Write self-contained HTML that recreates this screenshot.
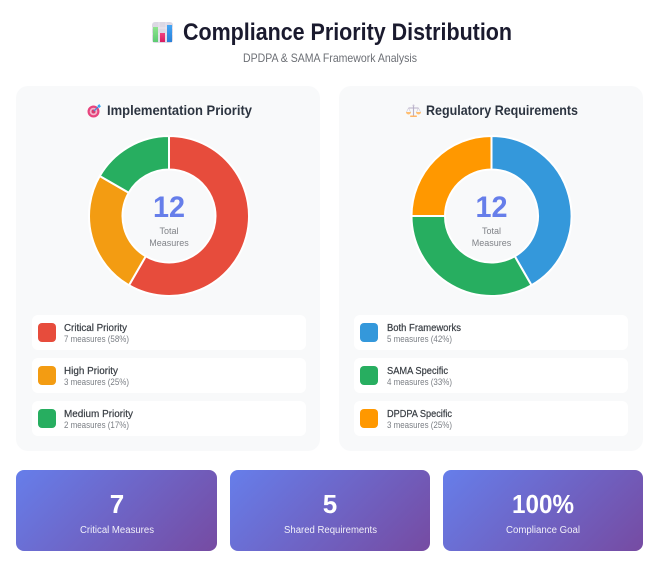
<!DOCTYPE html>
<html lang="en">
<head>
<meta charset="utf-8">
<title>Compliance Priority Distribution</title>
<style>
html,body{margin:0;padding:0;background:#fff;width:658px;height:566px;overflow:hidden}
body{position:relative;font-family:"Liberation Sans",sans-serif}
.panel{position:absolute;top:86px;width:304px;height:365px;background:#f8f9fa;border-radius:12px}
.item{position:absolute;width:274px;height:35px;background:#fff;border-radius:6px}
.sw{position:absolute;left:6px;top:8px;width:18px;height:19px;border-radius:4px}
.stat{position:absolute;top:470px;height:81px;border-radius:8px;background:linear-gradient(135deg,#667eea 0%,#764ba2 100%)}
svg{position:absolute;left:0;top:0}
text{font-family:"Liberation Sans",sans-serif}
.t{font-size:10px;fill:#3a3f45;stroke:#3a3f45;stroke-width:.22px}
.s{font-size:9px;fill:#7b7f85}
.pt{font-weight:700;font-size:14px;fill:#2c3440}
.n{font-weight:700;font-size:30px;fill:#667eea}
.c{font-size:9px;fill:#808388}
.sn{font-weight:700;font-size:26px;fill:#fff}
.sl{font-size:10px;fill:#fff;fill-opacity:.9}
</style>
</head>
<body>
<div class="panel" style="left:16px"></div>
<div class="panel" style="left:339px"></div>

<div class="item" style="left:32px;top:315px"><div class="sw" style="background:#e74c3c"></div></div>
<div class="item" style="left:32px;top:358px"><div class="sw" style="background:#f39c12"></div></div>
<div class="item" style="left:32px;top:401px"><div class="sw" style="background:#27ae60"></div></div>
<div class="item" style="left:354px;top:315px"><div class="sw" style="background:#3498db"></div></div>
<div class="item" style="left:354px;top:358px"><div class="sw" style="background:#27ae60"></div></div>
<div class="item" style="left:354px;top:401px"><div class="sw" style="background:#ff9800"></div></div>

<div class="stat" style="left:16px;width:201px"></div>
<div class="stat" style="left:230px;width:200px"></div>
<div class="stat" style="left:443px;width:200px"></div>

<svg width="658" height="566" viewBox="0 0 658 566" xmlns="http://www.w3.org/2000/svg">
  <defs>
    <linearGradient id="g1" x1="0" y1="0" x2="0" y2="1"><stop offset="0" stop-color="#8fe48f"/><stop offset="1" stop-color="#5ccb72"/></linearGradient>
    <linearGradient id="g2" x1="0" y1="0" x2="0" y2="1"><stop offset="0" stop-color="#f2407f"/><stop offset="1" stop-color="#d81b60"/></linearGradient>
    <linearGradient id="g3" x1="0" y1="0" x2="0" y2="1"><stop offset="0" stop-color="#42a5f5"/><stop offset="1" stop-color="#2a80d8"/></linearGradient>
  </defs>

  <!-- Header icon -->
  <rect x="152" y="22" width="21" height="21" rx="3" fill="#dcd8e4"/>
  <path d="M152 28h21M152 34h21M159 22v21M166 22v21" stroke="#efebf3" stroke-width=".7"/>
  <rect x="153" y="27" width="5" height="15" fill="url(#g1)"/>
  <rect x="160" y="33" width="5" height="9" fill="url(#g2)"/>
  <rect x="167" y="25" width="5" height="17" fill="url(#g3)"/>

  <text x="183" y="40" font-size="24" font-weight="700" fill="#1a1a2e" textLength="329" lengthAdjust="spacingAndGlyphs">Compliance Priority Distribution</text>
  <text x="243" y="62" font-size="12" fill="#6c6f75" textLength="174" lengthAdjust="spacingAndGlyphs">DPDPA &amp; SAMA Framework Analysis</text>

  <!-- Target icon -->
  <circle cx="93.5" cy="111.500" r="6" fill="#e8457e"/>
  <circle cx="93.5" cy="111.500" r="3.800" fill="#f3b6cb"/>
  <circle cx="93.5" cy="111.500" r="2" fill="#d83a6e"/>
  <path d="M94 111l5-5" stroke="#3f8fdc" stroke-width="1.200"/>
  <path d="M97.500 105.500l2-1.500.5 1.500 1.200.5-2 2z" fill="#35a4f0"/>
  <text class="pt" x="107" y="115" textLength="145" lengthAdjust="spacingAndGlyphs">Implementation Priority</text>

  <!-- Scales icon -->
  <path d="M413.500 105.500v10M408.500 108h10" stroke="#b8b0c8" stroke-width="1.100" fill="none"/>
  <path d="M408.500 108l-2 4M408.500 108l2 4M418.500 108l-2 4M418.500 108l2 4" stroke="#cdc7d8" stroke-width=".6" fill="none"/>
  <path d="M406 112h5a2.500 2.500 0 0 1-5 0zM416 112h5a2.500 2.500 0 0 1-5 0z" fill="#ffbe70"/>
  <rect x="410" y="115.500" width="7" height="1.500" rx=".7" fill="#ffb566"/>
  <circle cx="413.500" cy="105.500" r="1" fill="#c9c2d4"/>
  <text class="pt" x="426" y="115" textLength="152" lengthAdjust="spacingAndGlyphs">Regulatory Requirements</text>

  <!-- Left donut -->
  <g stroke="#fff" stroke-width="2" stroke-linejoin="miter">
    <path fill="#e74c3c" d="M169 136A80 80 0 1 1 129 285.280L145.750 256.270A46.500 46.500 0 1 0 169 169.500Z"/>
    <path fill="#f39c12" d="M129 285.280A80 80 0 0 1 99.720 176L128.730 192.750A46.500 46.500 0 0 0 145.750 256.270Z"/>
    <path fill="#27ae60" d="M99.720 176A80 80 0 0 1 169 136L169 169.500A46.500 46.500 0 0 0 128.730 192.750Z"/>
  </g>
  <text class="n" x="169" y="217" text-anchor="middle" textLength="32" lengthAdjust="spacingAndGlyphs">12</text>
  <text class="c" x="169" y="234" text-anchor="middle">Total</text>
  <text class="c" x="169" y="246" text-anchor="middle">Measures</text>

  <!-- Right donut -->
  <g stroke="#fff" stroke-width="2" stroke-linejoin="miter">
    <path fill="#3498db" d="M491.500 136A80 80 0 0 1 531.500 285.280L514.750 256.270A46.500 46.500 0 0 0 491.500 169.500Z"/>
    <path fill="#27ae60" d="M531.500 285.280A80 80 0 0 1 411.500 216L445 216A46.500 46.500 0 0 0 514.750 256.270Z"/>
    <path fill="#ff9800" d="M411.500 216A80 80 0 0 1 491.500 136L491.500 169.500A46.500 46.500 0 0 0 445 216Z"/>
  </g>
  <text class="n" x="491.500" y="217" text-anchor="middle" textLength="32" lengthAdjust="spacingAndGlyphs">12</text>
  <text class="c" x="491.500" y="234" text-anchor="middle">Total</text>
  <text class="c" x="491.500" y="246" text-anchor="middle">Measures</text>

  <!-- Left legend -->
  <text class="t" x="64" y="331" textLength="63" lengthAdjust="spacingAndGlyphs">Critical Priority</text>
  <text class="s" x="64" y="342" textLength="65" lengthAdjust="spacingAndGlyphs">7 measures (58%)</text>
  <text class="t" x="64" y="374" textLength="54" lengthAdjust="spacingAndGlyphs">High Priority</text>
  <text class="s" x="64" y="385" textLength="65" lengthAdjust="spacingAndGlyphs">3 measures (25%)</text>
  <text class="t" x="64" y="417" textLength="69" lengthAdjust="spacingAndGlyphs">Medium Priority</text>
  <text class="s" x="64" y="428" textLength="65" lengthAdjust="spacingAndGlyphs">2 measures (17%)</text>

  <!-- Right legend -->
  <text class="t" x="387" y="331" textLength="74" lengthAdjust="spacingAndGlyphs">Both Frameworks</text>
  <text class="s" x="387" y="342" textLength="65" lengthAdjust="spacingAndGlyphs">5 measures (42%)</text>
  <text class="t" x="387" y="374" textLength="61" lengthAdjust="spacingAndGlyphs">SAMA Specific</text>
  <text class="s" x="387" y="385" textLength="65" lengthAdjust="spacingAndGlyphs">4 measures (33%)</text>
  <text class="t" x="387" y="417" textLength="65" lengthAdjust="spacingAndGlyphs">DPDPA Specific</text>
  <text class="s" x="387" y="428" textLength="65" lengthAdjust="spacingAndGlyphs">3 measures (25%)</text>

  <!-- Stats -->
  <text class="sn" x="117" y="513" text-anchor="middle">7</text>
  <text class="sl" x="80" y="533" textLength="74" lengthAdjust="spacingAndGlyphs">Critical Measures</text>
  <text class="sn" x="330" y="513" text-anchor="middle">5</text>
  <text class="sl" x="284" y="533" textLength="93" lengthAdjust="spacingAndGlyphs">Shared Requirements</text>
  <text class="sn" x="512" y="513" textLength="62" lengthAdjust="spacingAndGlyphs">100%</text>
  <text class="sl" x="506" y="533" textLength="74" lengthAdjust="spacingAndGlyphs">Compliance Goal</text>
</svg>
</body>
</html>
